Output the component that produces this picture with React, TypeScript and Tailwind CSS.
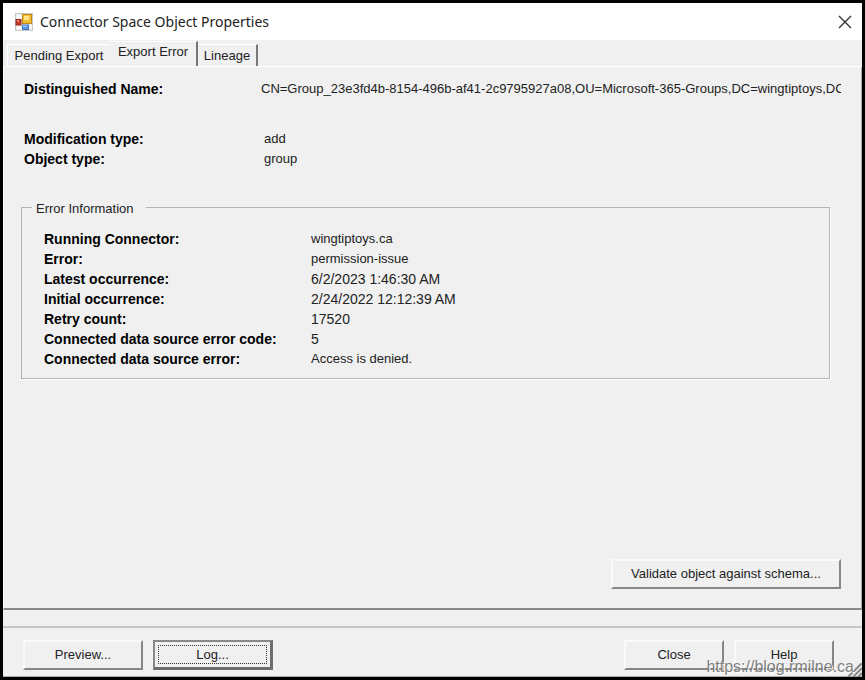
import React from "react";

const errorRows = [
	{ label: "Running Connector:", value: "wingtiptoys.ca" },
	{ label: "Error:", value: "permission-issue" },
	{ label: "Latest occurrence:", value: "6/2/2023 1:46:30 AM", numeric: true },
	{ label: "Initial occurrence:", value: "2/24/2022 12:12:39 AM", numeric: true },
	{ label: "Retry count:", value: "17520", numeric: true },
	{ label: "Connected data source error code:", value: "5", numeric: true },
	{ label: "Connected data source error:", value: "Access is denied." },
];

const raised = "h-[30px] border-2 border-t-[#fafafa] border-l-[#fafafa] border-r-[#868686] border-b-[#868686] bg-[#f0f0f0]";
const term = "whitespace-nowrap text-sm leading-5 font-bold text-black";

const AppIcon = () => (
	<svg width="18" height="18" viewBox="0 0 18 18" aria-hidden="true">
		<rect x="0.5" y="0.5" width="17" height="17" fill="#e9e9e9" stroke="#c8c8c8" />
		<rect x="1.5" y="1.5" width="5" height="4" fill="#fafafa" />
		<rect x="1.5" y="13" width="5" height="3.5" fill="#fafafa" />
		<rect x="14.5" y="12" width="2" height="4" fill="#fafafa" />
		<rect x="7.5" y="1.5" width="9" height="9" fill="#f2bd32" stroke="#c18a16" />
		<rect x="9" y="3" width="5" height="4" fill="#ffe58a" />
		<rect x="1" y="6.5" width="5" height="5.5" fill="#c83a2c" stroke="#9b2a22" />
		<rect x="2" y="7" width="2" height="2" fill="#ec8474" />
		<rect x="7.5" y="12" width="6" height="4.5" fill="#5a96e8" stroke="#4179c9" />
		<rect x="8" y="12.5" width="4" height="1.5" fill="#9cc5fa" />
	</svg>
);

const App = () => (
	<div className="relative flex min-h-screen flex-col border-[3px] border-black bg-[#f0f0f0] font-['Liberation_Sans',Arial,sans-serif] text-[13px] leading-5 text-[#222]">
		<header className="flex h-[37px] items-center bg-white pl-3 pr-[7px]">
			<AppIcon />
			<h1 className="ml-[7px] flex-1 font-['Noto_Sans','Segoe_UI',sans-serif] text-sm text-[#222]">Connector Space Object Properties</h1>
			<button type="button" aria-label="Close window" className="flex size-5 items-center justify-center">
				<svg width="14" height="14" viewBox="0 0 14 14" fill="none" stroke="#333" strokeWidth="1.4">
					<path d="M1 1l12 12M13 1L1 13" />
				</svg>
			</button>
		</header>

		<div role="tablist" className="flex h-[27px] items-end border-b border-white pl-1">
			<button type="button" role="tab" aria-selected="false" className="h-[22px] w-[103px] border-l border-t border-white">Pending Export</button>
			<button type="button" role="tab" aria-selected="true" className="h-[25px] w-[88px] border-t border-r-2 border-t-white border-r-[#777] pb-1">Export Error</button>
			<button type="button" role="tab" aria-selected="false" className="h-[22px] w-[60px] border-t border-r-2 border-t-white border-r-[#777]">Lineage</button>
		</div>

		<main role="tabpanel" className="flex flex-1 flex-col border-b-2 border-l border-r border-b-[#888] border-l-white border-r-[#aaa] pl-5 pr-5 pt-3 pb-[19px]">
			<dl className="flex">
				<dt className={`${term} w-[237px] shrink-0`}>Distinguished Name:</dt>
				<dd className="min-w-0 flex-1 overflow-hidden whitespace-nowrap">CN=Group_23e3fd4b-8154-496b-af41-2c9795927a08,OU=Microsoft-365-Groups,DC=wingtiptoys,DC=ca</dd>
			</dl>
			<dl className="mt-[30px] grid grid-cols-[240px_1fr]">
				<dt className={term}>Modification type:</dt>
				<dd>add</dd>
				<dt className={term}>Object type:</dt>
				<dd>group</dd>
			</dl>

			<fieldset className="-ml-[3px] mr-[11px] mt-[26px] border border-[#b4b4b4] px-[22px] pb-[9px] shadow-[1px_1px_0_white]">
				<legend className="-ml-3 pl-1 pr-3 pt-1">Error Information</legend>
				<dl className="mt-[10px] grid grid-cols-[267px_1fr]">
					{errorRows.map((row) => (
						<React.Fragment key={row.label}>
							<dt className={term}>{row.label}</dt>
							<dd className={row.numeric ? "text-sm leading-5" : ""}>{row.value}</dd>
						</React.Fragment>
					))}
				</dl>
			</fieldset>

			<div className="mt-auto flex justify-end">
				<button type="button" className={`${raised} w-[230px]`}>Validate object against schema...</button>
			</div>
		</main>

		<footer className="mt-4 flex items-center border-t-2 border-b border-t-[#c8c8c8] border-b-[#aaa] pt-3 pb-[6px] pl-5 pr-7">
			<button type="button" className={`${raised} w-[120px]`}>Preview...</button>
			<button type="button" className="ml-[10px] h-[30px] w-[120px] border-2 border-r-3 border-b-3 border-t-[#888] border-l-[#888] border-r-[#6e6e6e] border-b-[#6e6e6e] bg-[#f0f0f0] p-[3px]">
				<span className="flex h-full items-center justify-center border border-dotted border-[#333]">Log...</span>
			</button>
			<button type="button" className={`${raised} ml-auto w-[100px]`}>Close</button>
			<button type="button" className={`${raised} ml-[10px] w-[100px]`}>Help</button>
		</footer>

		<svg className="absolute bottom-0 right-0" width="14" height="14" viewBox="0 0 14 14" stroke="#888" strokeWidth="2" aria-hidden="true">
			<path d="M0 14L14 0M5 14L14 5M10 14L14 10" />
		</svg>
		<a href="https://blog.rmilne.ca" className="absolute bottom-0 right-2 text-base leading-5 text-[#808080] [text-shadow:1px_1px_0_white]">https://blog.rmilne.ca</a>
	</div>
);

export default App;
